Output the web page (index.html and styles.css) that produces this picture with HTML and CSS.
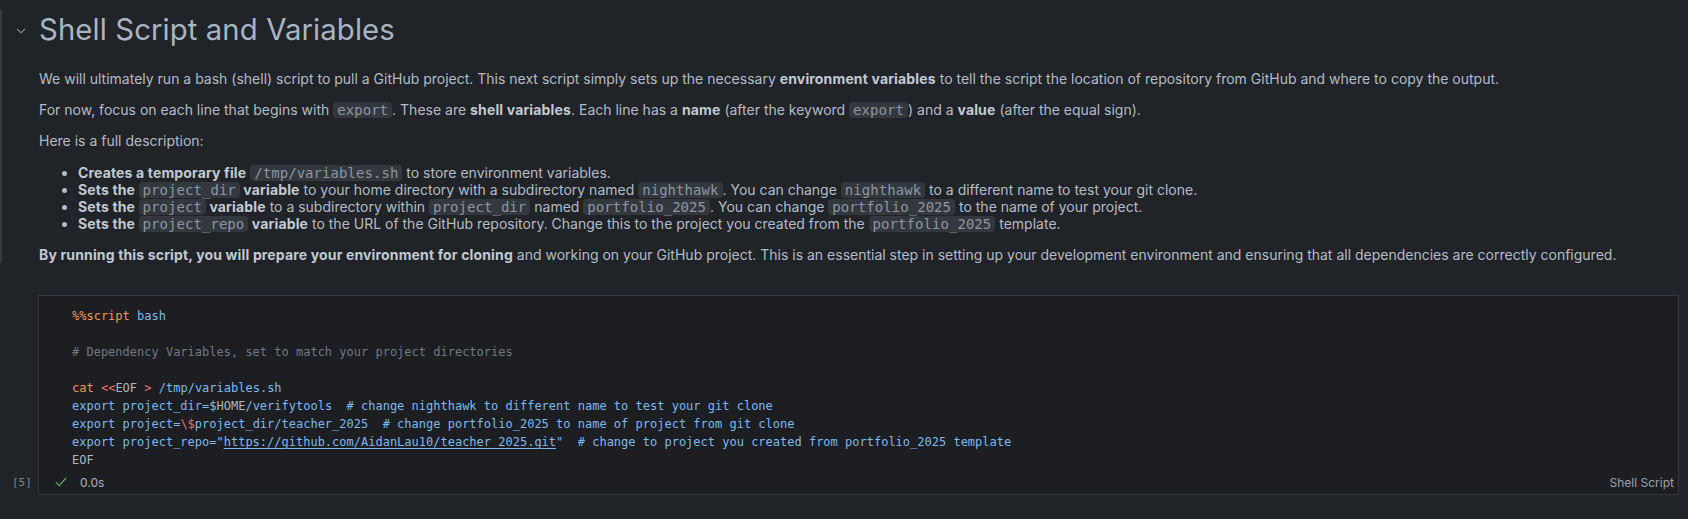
FILE: index.html
```html
<!DOCTYPE html>
<html>
<head>
<meta charset="utf-8">
<link rel="stylesheet" href="styles.css">
</head>
<body>
<div class="md-cell">
  <div class="heading-row">
    <svg class="chevron" width="10" height="6" viewBox="0 0 10 6"><path d="M1 0.8 L5 4.8 L9 0.8" fill="none" stroke="#8b949e" stroke-width="1.1"/></svg>
    <h2>Shell Script and Variables</h2>
  </div>
  <div class="md-body">
    <p>We will ultimately run a bash (shell) script to pull a GitHub project. This next script simply sets up the necessary <b>environment variables</b> to tell the script the location of repository from GitHub and where to copy the output.</p>
    <p>For now, focus on each line that begins with <code>export</code>. These are <b>shell variables</b>. Each line has a <b>name</b> (after the keyword <code>export</code>) and a <b>value</b> (after the equal sign).</p>
    <p>Here is a full description:</p>
    <ul>
      <li><b>Creates a temporary file</b> <code>/tmp/variables.sh</code> to store environment variables.</li>
      <li><b>Sets the <code>project_dir</code> variable</b> to your home directory with a subdirectory named <code>nighthawk</code>. You can change <code>nighthawk</code> to a different name to test your git clone.</li>
      <li><b>Sets the <code>project</code> variable</b> to a subdirectory within <code>project_dir</code> named <code>portfolio_2025</code>. You can change <code>portfolio_2025</code> to the name of your project.</li>
      <li><b>Sets the <code>project_repo</code> variable</b> to the URL of the GitHub repository. Change this to the project you created from the <code>portfolio_2025</code> template.</li>
    </ul>
    <p><b>By running this script, you will prepare your environment for cloning</b> and working on your GitHub project. This is an essential step in setting up your development environment and ensuring that all dependencies are correctly configured.</p>
  </div>
</div>
<div class="code-row">
  <div class="exec-count">[5]</div>
  <div class="code-cell">
<pre class="code"><span class="o">%%script</span> <span class="bl">bash</span>

<span class="cm"># Dependency Variables, set to match your project directories</span>

<span class="o">cat</span> <span class="r">&lt;&lt;</span><span class="w">EOF</span> <span class="r">&gt;</span> <span class="bl">/tmp/variables.sh</span>
<span class="bl">export project_dir=</span><span class="w">$HOME</span><span class="bl">/verifytools  # change nighthawk to different name to test your git clone</span>
<span class="bl">export project=</span><span class="r">\$</span><span class="bl">project_dir/teacher_2025  # change portfolio_2025 to name of project from git clone</span>
<span class="bl">export project_repo="<span class="u">https://github.com/AidanLau10/teacher_2025.git</span>"  # change to project you created from portfolio_2025 template</span>
<span class="w">EOF</span></pre>
    <div class="status">
      <div class="status-left">
        <svg class="check" width="12" height="10" viewBox="0 0 12 10"><path d="M1 5.2 L4.2 8.6 L11 1" fill="none" stroke="#57ab5a" stroke-width="1.2"/></svg>
        <span class="time">0.0s</span>
      </div>
      <span class="lang">Shell Script</span>
    </div>
  </div>
</div>
</body>
</html>
```
FILE: styles.css
```css
html, body {
  margin: 0;
  padding: 0;
  background: #202328;
  width: 1688px;
  height: 519px;
  overflow: hidden;
}
body {
  font-family: "Inter", "Liberation Sans", sans-serif;
  color: #adbac7;
}
.md-cell {
  margin-top: 10px;
  height: 253px;
  border-left: 2px solid #363b42;
  box-sizing: border-box;
  position: relative;
}
.heading-row {
  display: flex;
  align-items: center;
  padding-top: 2px;
}
.chevron {
  margin-left: 14px;
  margin-right: 13px;
  margin-top: 2px;
}
h2 {
  margin: 0;
  font-weight: 400;
  font-size: 29.3px;
  line-height: 36px;
  color: #a9b5c2;
  letter-spacing: 0.1px;
}
.md-body {
  padding-left: 37px;
  padding-top: 22px;
  font-size: 14px;
  line-height: 17px;
  color: #b3bcc6;
}
p {
  margin: 0 0 14px 0;
}
b {
  font-weight: 700;
  color: #c1c9d2;
  letter-spacing: 0.15px;
}
ul {
  margin: 15px 0 14px 0;
  padding-left: 39px;
}
li {
  margin: 0;
  line-height: 17px;
}
code {
  font-family: "DejaVu Sans Mono", "Liberation Mono", monospace;
  font-size: 14px;
  line-height: 12px;
  font-weight: 400;
  letter-spacing: 0.05px;
  background: #33383f;
  color: #8c96a1;
  border-radius: 4px;
  padding: 0 4px;
}
.code-row {
  display: flex;
  align-items: flex-end;
  margin-top: 32px;
}
.exec-count {
  width: 38px;
  box-sizing: border-box;
  padding-left: 12px;
  font-family: "DejaVu Sans Mono", monospace;
  font-size: 11px;
  line-height: 22px;
  color: #7d858f;
  margin-bottom: 1px;
}
.code-cell {
  width: 1641px;
  height: 200px;
  box-sizing: border-box;
  border: 1px solid #343940;
  background: #1c1e22;
  display: flex;
  flex-direction: column;
}
.code {
  margin: 0;
  padding: 11px 0 0 33px;
  font-family: "DejaVu Sans Mono", "Liberation Mono", monospace;
  font-size: 12px;
  line-height: 18px;
  color: #7cb9ee;
  flex: 1;
}
.o { color: #f0985a; }
.bl { color: #7cb9ee; }
.cm { color: #6f7a86; }
.r { color: #ee6d65; }
.w { color: #adb6c0; }
.u { text-decoration: underline; text-underline-offset: 2px; }
.status {
  display: flex;
  justify-content: space-between;
  align-items: center;
  height: 22px;
  padding: 0 4px 1px 16px;
}
.status-left {
  display: flex;
  align-items: center;
}
.check {
  margin-right: 13px;
}
.time {
  font-size: 12px;
  color: #aab3bd;
}
.lang {
  font-size: 12px;
  color: #9aa3ad;
}
```
